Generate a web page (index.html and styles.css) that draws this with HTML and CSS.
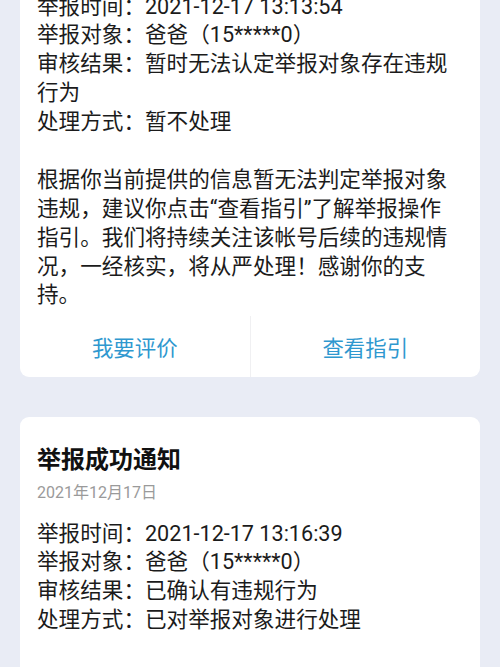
FILE: index.html
```html
<!DOCTYPE html>
<html lang="zh-CN">
<head>
<meta charset="utf-8">
<link rel="stylesheet" href="styles.css">
</head>
<body>
<div class="page">
  <section class="card card-first">
    <div class="info">
      <div class="row"><span class="label">举报时间：</span><span class="val">2021-12-17 13:13:54</span></div>
      <div class="row"><span class="label">举报对象：</span><span class="val">爸爸（15*****0）</span></div>
      <div class="row"><span class="label">审核结果：</span>暂时无法认定举报对象存在违规行为</div>
      <div class="row"><span class="label">处理方式：</span><span class="val">暂不处理</span></div>
    </div>
    <p class="para">根据你当前提供的信息暂无法判定举报对象违规，建议你点击“查看指引”了解举报操作指引。我们将持续关注该帐号后续的违规情况，一经核实，将从严处理！感谢你的支持。</p>
    <div class="actions">
      <div class="action">我要评价</div>
      <div class="action">查看指引</div>
    </div>
  </section>

  <section class="card card-second">
    <h2 class="title">举报成功通知</h2>
    <div class="date">2021年12月17日</div>
    <div class="info">
      <div class="row"><span class="label">举报时间：</span><span class="val">2021-12-17 13:16:39</span></div>
      <div class="row"><span class="label">举报对象：</span><span class="val">爸爸（15*****0）</span></div>
      <div class="row"><span class="label">审核结果：</span><span class="val">已确认有违规行为</span></div>
      <div class="row"><span class="label">处理方式：</span><span class="val">已对举报对象进行处理</span></div>
    </div>
  </section>
</div>
</body>
</html>
```
FILE: styles.css
```css
html, body {
  margin: 0;
  padding: 0;
  background: #e9ecf5;
}
body {
  font-family: Roboto, "Noto Sans CJK SC", sans-serif;
  color: #1b1b1b;
  overflow: hidden;
}
.page {
  display: flex;
  flex-direction: column;
  gap: 40px;
  padding: 0 20px 40px;
}
.card {
  background: #fff;
  border-radius: 9px;
  padding: 0 17px;
}
.card-first {
  margin-top: -30px;
  padding-top: 22.6px;
}
.info {
  font-size: 21.6px;
  line-height: 28.75px;
}
.row {
  margin: 0;
}
.para {
  margin: 30px 0 0;
  padding-right: 8px;
  font-size: 21.6px;
  line-height: 28.75px;
}
.actions {
  display: flex;
  margin: 6px -17px 0;
  height: 61px;
}
.action {
  flex: 1;
  display: flex;
  align-items: center;
  justify-content: center;
  font-size: 21.4px;
  color: #2f98cf;
}
.action + .action {
  border-left: 1px solid #f0f0f2;
}
.card-second {
  padding-top: 27px;
  padding-bottom: 60px;
}
.title {
  margin: 0;
  font-size: 24px;
  line-height: 32px;
  font-weight: 700;
  color: #111;
}
.date {
  margin-top: 6px;
  font-size: 16px;
  line-height: 22px;
  color: #9a9a9a;
}
.card-second .info {
  margin-top: 15.6px;
}
```
